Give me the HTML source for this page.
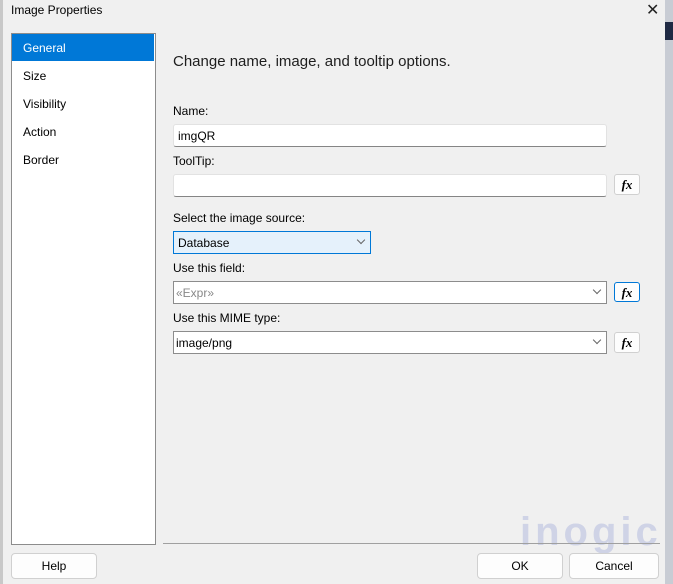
<!DOCTYPE html>
<html><head><meta charset="utf-8"><style>
*{box-sizing:border-box;margin:0;padding:0}
body{width:673px;height:584px;background:#f0f0f0;font-family:"Liberation Sans",sans-serif;font-size:12px;color:#000;position:relative;overflow:hidden}
.a{position:absolute}
.lbl{position:absolute;font-size:12px}
.tb{position:absolute;background:#fff;border:1px solid #e2e2e2;border-bottom:1px solid #858585;border-radius:3px;padding:4px 4px 2px;font-size:12px}
.fx{position:absolute;width:26px;height:21px;background:#fdfdfd;border:1px solid #d0d0d0;border-radius:3px;font-family:"Liberation Serif",serif;font-weight:bold;font-style:italic;font-size:13px;text-align:center;line-height:19px}
.chev{position:absolute;right:6px;top:5px;width:6px;height:6px;border-right:1px solid #666;border-bottom:1px solid #666;transform:rotate(45deg)}
.btn{position:absolute;background:#fdfdfd;border:1px solid #d0d0d0;border-radius:4px;text-align:center;line-height:25px;font-size:12px}
.item{position:absolute;left:12px;width:142px;height:27px;padding-left:11px;line-height:28px;font-size:12px}
</style></head><body>
<div class="a" style="left:0;top:0;width:3px;height:584px;background:#c8c8c8"></div>
<div class="a" style="left:665px;top:0;width:8px;height:584px;background:#c8ccd4"></div>
<div class="a" style="left:665px;top:22px;width:8px;height:18px;background:#1f2a44"></div>
<div class="lbl" style="left:11px;top:3px">Image Properties</div>
<div class="a" style="left:646px;top:0;font-size:16px;color:#222">✕</div>
<div class="a" style="left:11px;top:33px;width:145px;height:512px;background:#fff;border:1px solid #8c8c8c"></div>
<div class="item" style="top:34px;background:#0078d7;color:#fff">General</div>
<div class="item" style="top:62px">Size</div>
<div class="item" style="top:90px">Visibility</div>
<div class="item" style="top:118px">Action</div>
<div class="item" style="top:146px">Border</div>
<div class="a" style="left:173px;top:53px;font-size:15px;color:#1e1e1e">Change name, image, and tooltip options.</div>
<div class="lbl" style="left:173px;top:104px">Name:</div>
<div class="tb" style="left:173px;top:124px;width:434px;height:23px">imgQR</div>
<div class="lbl" style="left:173px;top:154px">ToolTip:</div>
<div class="tb" style="left:173px;top:174px;width:434px;height:23px"></div>
<div class="fx" style="left:614px;top:174px">fx</div>
<div class="lbl" style="left:173px;top:211px">Select the image source:</div>
<div class="tb" style="left:173px;top:231px;width:198px;height:23px;background:#e5f1fb;border:1px solid #0078d7;border-radius:0">Database<div class="chev"></div></div>
<div class="lbl" style="left:173px;top:261px">Use this field:</div>
<div class="tb" style="left:173px;top:281px;width:434px;height:23px;border:1px solid #8c8c8c;border-radius:0;color:#888;padding-left:2px">«Expr»<div class="chev"></div></div>
<div class="fx" style="left:614px;top:282px;border:1px solid #0078d7;height:20px">fx</div>
<div class="lbl" style="left:173px;top:311px">Use this MIME type:</div>
<div class="tb" style="left:173px;top:331px;width:434px;height:23px;border:1px solid #8c8c8c;border-radius:0;padding-left:2px">image/png<div class="chev"></div></div>
<div class="fx" style="left:614px;top:332px">fx</div>
<div class="a" style="left:520px;top:510px;font-size:40px;font-weight:bold;color:#cfd3e6;letter-spacing:4px">inogic</div>
<div class="a" style="left:163px;top:543px;width:497px;height:1px;background:#a0a0a0"></div>
<div class="btn" style="left:11px;top:553px;width:86px;height:26px">Help</div>
<div class="btn" style="left:477px;top:553px;width:86px;height:26px">OK</div>
<div class="btn" style="left:569px;top:553px;width:90px;height:26px">Cancel</div>
</body></html>
